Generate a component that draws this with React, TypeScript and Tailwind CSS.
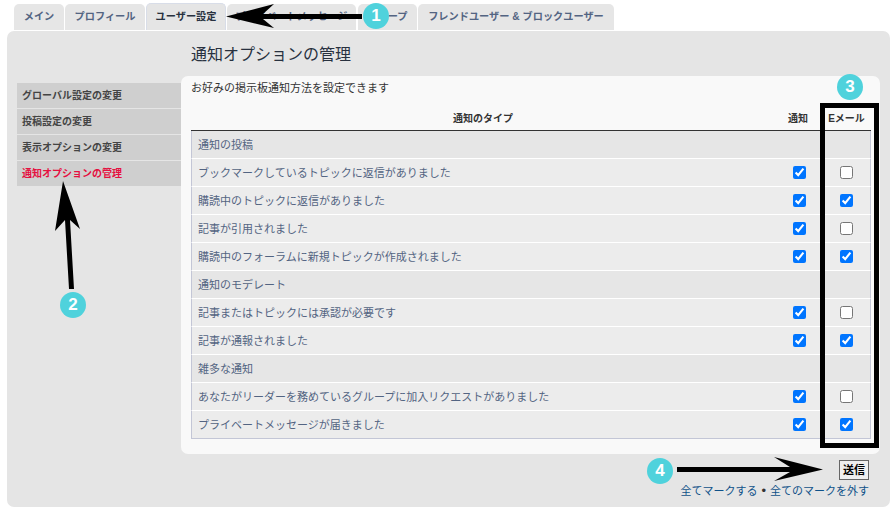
import React from "react";

const font = { fontFamily: '"Liberation Sans", "Noto Sans CJK JP", sans-serif' };

function Tab({ w, label, active }: { w: string; label: string; active?: boolean }) {
  return (
    <div className={`${w} flex items-center justify-center rounded-t-[5px] text-[10.2px] font-bold whitespace-nowrap ${active ? "h-[27px] -mt-[1px] bg-[#e5e5e5] border-t border-x border-[#d8dde8] text-[#28313f]" : "h-[26px] bg-[#e6e6e6] text-[#536482]"}`}>
      {label}
    </div>
  );
}

function MenuItem({ label, active }: { label: string; active?: boolean }) {
  return (
    <div className={`h-[25px] mb-[1px] pl-[5px] flex items-center bg-[#cfcfcf] text-[10px] font-bold ${active ? "text-[#e5103f]" : "text-[#444444]"}`}>
      {label}
    </div>
  );
}

function Section({ label }: { label: string }) {
  return (
    <div className="h-[28px] pt-[1px] flex items-center pl-[6px] bg-[#e6e6e6] border-b border-white border-x-[1px] border-x-[#c3c6d6] text-[11px] text-[#536482]">
      {label}
    </div>
  );
}

function Row({ label, email }: { label: string; email: boolean }) {
  return (
    <div className="h-[28px] last:h-[27px] last:border-b-0 flex items-center pl-[6px] bg-[#ececec] border-b border-white border-x-[1px] border-x-[#c3c6d6] text-[11px] text-[#536482]">
      <span className="flex-1 pt-[1px]">{label}</span>
      <span className="w-[48px] flex justify-center">
        <input type="checkbox" checked readOnly className="m-0" />
      </span>
      <span className="w-[47px] flex justify-center">
        <input type="checkbox" checked={email} readOnly className="m-0" />
      </span>
    </div>
  );
}

function Badge({ n, className }: { n: string; className: string }) {
  return (
    <div className={`absolute w-[26px] h-[26px] rounded-full bg-[#4fd2dc] text-white text-[17px] font-bold flex items-center justify-center ${className}`}>
      {n}
    </div>
  );
}

export default function App() {
  return (
    <div className="relative w-[896px] h-[508px] overflow-hidden bg-white" style={font}>
      <div className="flex h-[31px] pt-[4px] pl-[14px]">
        <Tab w="w-[50px] mr-[1px]" label="メイン" />
        <Tab w="w-[80px] mr-[1px]" label="プロフィール" />
        <Tab w="w-[80px] mr-[1px]" label="ユーザー設定" active />
        <Tab w="w-[129px] mr-[2px]" label="プライベートメッセージ" />
        <Tab w="w-[59px] mr-[1px]" label="グループ" />
        <Tab w="w-[196px]" label="フレンドユーザー & ブロックユーザー" />
      </div>

      <div className="ml-[7px] w-[883px] h-[476px] rounded-[7px] bg-[#e5e5e5] pt-[11px] pl-[10px] pr-[10px]">
        <div className="pl-[174px] h-[34px] flex items-start text-[16px] leading-[26px] text-[#28313f]">
          通知オプションの管理
        </div>
        <div className="flex items-start">
          <div className="w-[164px] pt-[7px]">
            <MenuItem label="グローバル設定の変更" />
            <MenuItem label="投稿設定の変更" />
            <MenuItem label="表示オプションの変更" />
            <MenuItem label="通知オプションの管理" active />
          </div>
          <div className="w-[699px] h-[378px] rounded-[7px] bg-[#f9f9f9] pl-[10px] pr-[9px]">
            <div className="h-[30px] pt-[4px] text-[11px] leading-[16px] text-[#333333]">
              お好みの掲示板通知方法を設定できます
            </div>
            <div className="h-[25px] flex items-center border-b border-[#333333] text-[10px] font-bold text-[#333333]">
              <span className="flex-1 text-center pl-[1px]">通知のタイプ</span>
              <span className="w-[48px] text-center">通知</span>
              <span className="w-[49px] text-center">Eメール</span>
            </div>
            <div className="border-b border-[#c3c6d6]">
              <Section label="通知の投稿" />
              <Row label="ブックマークしているトピックに返信がありました" email={false} />
              <Row label="購読中のトピックに返信がありました" email />
              <Row label="記事が引用されました" email={false} />
              <Row label="購読中のフォーラムに新規トピックが作成されました" email />
              <Section label="通知のモデレート" />
              <Row label="記事またはトピックには承認が必要です" email={false} />
              <Row label="記事が通報されました" email />
              <Section label="雑多な通知" />
              <Row label="あなたがリーダーを務めているグループに加入リクエストがありました" email={false} />
              <Row label="プライベートメッセージが届きました" email />
            </div>
          </div>
        </div>
        <div className="flex flex-col items-end pr-[11px] pt-[6px]">
          <button className="w-[30px] h-[20px] border border-[#666666] bg-[#efefef] text-[11px] font-bold text-black flex items-center justify-center">
            送信
          </button>
          <div className="mt-[3px] text-[11px] leading-[16px] text-[#105289] whitespace-nowrap">
            全てマークする<span className="mx-[4px] text-[#333333] text-[13px] leading-none">•</span>全てのマークを外す
          </div>
        </div>
      </div>

      {/* Annotation overlays */}
      <svg className="absolute left-0 top-0 pointer-events-none" width="896" height="508" viewBox="0 0 896 508">
        <path d="M226 16.5 L274 4 L263 14 L362 14 L362 19 L263 19 L274 28 Z" fill="#000" />
        <path d="M63 181 L80 229 L70 220 L74 289 L69 289 L65 220 L55 231 Z" fill="#000" />
        <path d="M823 469.5 L774 457 L790 467 L677 467 L677 472 L790 472 L774 481 Z" fill="#000" />
        <rect x="822.5" y="105.5" width="54" height="340" fill="none" stroke="#000" strokeWidth="5" />
      </svg>
      <Badge n="1" className="left-[363px] top-[3px]" />
      <Badge n="2" className="left-[60px] top-[292px]" />
      <Badge n="3" className="left-[837px] top-[74px]" />
      <Badge n="4" className="left-[647px] top-[458px]" />
    </div>
  );
}
